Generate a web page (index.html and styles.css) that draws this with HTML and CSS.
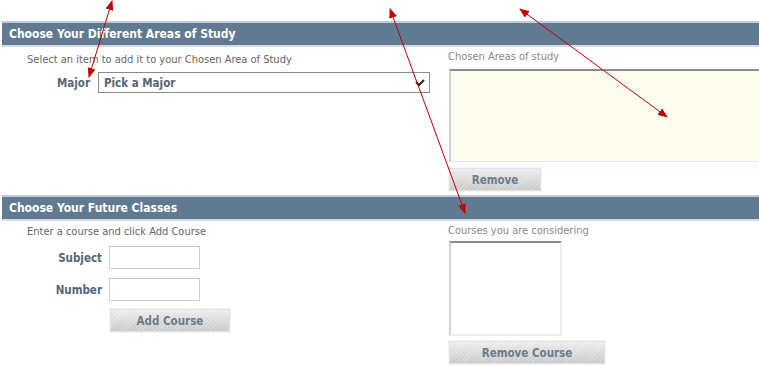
FILE: index.html
```html
<!DOCTYPE html>
<html lang="en">
<head>
  <meta charset="UTF-8">
  <title>Plan Your Studies</title>
  <link rel="stylesheet" href="styles.css">
</head>
<body>
  <div class="page">

    <section class="panel panel-study">
      <h2 class="bar">Choose Your Different Areas of Study</h2>
      <div class="cols">
        <div class="left">
          <p class="hint">Select an item to add it to your Chosen Area of Study</p>
          <div class="field field-major">
            <label>Major</label>
            <div class="select">
              <span>Pick a Major</span>
              <svg class="caret" width="10" height="7" viewBox="0 0 10 7"><path d="M1 3 L4 6 L9 1" fill="none" stroke="#222" stroke-width="2"/></svg>
            </div>
          </div>
        </div>
        <div class="right">
          <p class="caption">Chosen Areas of study</p>
          <div class="chosen"></div>
          <button class="btn btn-remove">Remove</button>
        </div>
      </div>
    </section>

    <section class="panel panel-classes">
      <h2 class="bar">Choose Your Future Classes</h2>
      <div class="cols">
        <div class="left">
          <p class="hint">Enter a course and click Add Course</p>
          <div class="field">
            <label>Subject</label>
            <input type="text" class="box">
          </div>
          <div class="field">
            <label>Number</label>
            <input type="text" class="box">
          </div>
          <button class="btn btn-add">Add Course</button>
        </div>
        <div class="right">
          <p class="caption">Courses you are considering</p>
          <div class="courses"></div>
          <button class="btn btn-remove-course">Remove Course</button>
        </div>
      </div>
    </section>

    <svg class="arrows" width="759" height="366" viewBox="0 0 759 366">
      <defs>
        <marker id="head" viewBox="0 0 10 8" refX="9" refY="4" markerWidth="10" markerHeight="8" markerUnits="userSpaceOnUse" orient="auto-start-reverse">
          <path d="M0 0 L10 4 L0 8 Z" fill="#c00000"/>
        </marker>
      </defs>
      <line x1="112" y1="1" x2="89" y2="77" stroke="#c00000" stroke-width="1" marker-start="url(#head)" marker-end="url(#head)"/>
      <line x1="390" y1="9" x2="465" y2="213" stroke="#c00000" stroke-width="1" marker-start="url(#head)" marker-end="url(#head)"/>
      <line x1="520" y1="9" x2="667" y2="117" stroke="#c00000" stroke-width="1" marker-start="url(#head)" marker-end="url(#head)"/>
    </svg>

  </div>
</body>
</html>
```

FILE: styles.css
```css
body {
  margin: 0;
  background: #fff;
  font-family: "DejaVu Sans Condensed", "DejaVu Sans", sans-serif;
  font-stretch: condensed;
  font-size: 11px;
  color: #666;
}

.page {
  position: relative;
  width: 759px;
  height: 366px;
  overflow: hidden;
  padding-top: 21px;
  box-sizing: border-box;
}

.panel {
  margin-left: 2px;
}

.bar {
  margin: 0;
  height: 22px;
  line-height: 22px;
  padding-left: 7px;
  background: #5f7a91;
  border-top: 2px solid #c3ccd4;
  border-bottom: 2px solid #d4dbe1;
  color: #fff;
  font-size: 12px;
  font-weight: bold;
}

.cols {
  display: flex;
}

.left {
  width: 446px;
  padding-left: 25px;
  box-sizing: border-box;
}

.right {
  flex: 1;
}

p {
  margin: 0;
}

.hint {
  color: #666;
}

.caption {
  color: #888;
}

.field {
  display: flex;
  align-items: center;
}

.field label {
  font-weight: bold;
  color: #566677;
  font-size: 11.5px;
  text-align: right;
}

/* first section */
.panel-study .cols {
  height: 146px;
}

.panel-study .hint {
  margin-top: 6px;
}

.field-major {
  margin-top: 6px;
}

.field-major label {
  width: 63px;
  margin-right: 8px;
}

.select {
  width: 332px;
  height: 21px;
  box-sizing: border-box;
  border: 1px solid #8a8a8a;
  display: flex;
  align-items: center;
  justify-content: space-between;
  padding: 0 4px 0 5px;
  font-weight: bold;
  color: #566677;
  font-size: 11.5px;
}

.panel-study .caption {
  margin-top: 3px;
}

.chosen {
  margin-top: 6px;
  margin-left: 1px;
  height: 93px;
  background: #fefef0;
  border-top: 2px solid #8c8c8c;
  border-left: 2px solid #cfcfcf;
  border-bottom: 1px solid #e6e6e6;
  box-sizing: border-box;
}

.btn {
  display: block;
  height: 23px;
  box-sizing: border-box;
  border: 1px solid #e2e2e2;
  outline: 1px solid #f4f4f4;
  background: repeating-linear-gradient(135deg, rgba(255,255,255,0.25) 0 1px, rgba(0,0,0,0) 1px 3px), linear-gradient(#ececec, #c9c9c9);
  color: #6b7d8e;
  font-family: inherit;
  font-stretch: condensed;
  font-weight: bold;
  font-size: 11.5px;
  padding: 0;
  cursor: pointer;
}

.btn-remove {
  width: 92px;
  margin: 6px 0 0 1px;
}

/* second section */
.panel-classes {
  margin-top: 2px;
}

.panel-classes .hint {
  margin-top: 4px;
}

.panel-classes .field {
  margin-top: 8px;
}

.panel-classes .field + .field {
  margin-top: 9px;
}

.panel-classes .field label {
  width: 75px;
  margin-right: 7px;
}

.box {
  width: 91px;
  height: 23px;
  box-sizing: border-box;
  border: 1px solid #d0d0d0;
  border-top-color: #c4c4c4;
  margin: 0;
  padding: 0;
  background: #fff;
}

.btn-add {
  width: 120px;
  margin: 8px 0 0 83px;
}

.panel-classes .caption {
  margin-top: 3px;
}

.courses {
  width: 113px;
  height: 95px;
  margin: 4px 0 0 1px;
  box-sizing: border-box;
  border-top: 2px solid #8c8c8c;
  border-left: 2px solid #d2d2d2;
  border-right: 2px solid #eeeeee;
  border-bottom: 2px solid #eeeeee;
}

.btn-remove-course {
  width: 156px;
  margin: 5px 0 0 1px;
}

.arrows {
  position: absolute;
  top: 0;
  left: 0;
  pointer-events: none;
}
```
